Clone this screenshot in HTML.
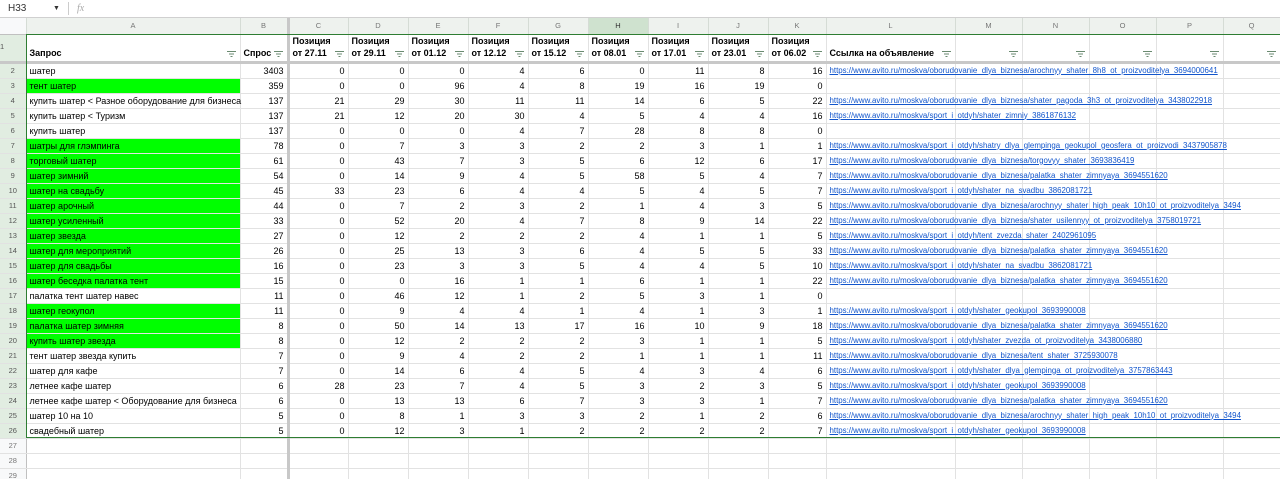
<!DOCTYPE html>
<html><head><meta charset="utf-8">
<style>
*{box-sizing:border-box;margin:0;padding:0}
html,body{width:1280px;height:479px;overflow:hidden}
body{background:#fff;font-family:"Liberation Sans",Arial,sans-serif;font-size:9px;color:#000;position:relative}
.wrap{width:1280px;height:479px;overflow:hidden;position:relative}
.bar{height:18px;border-bottom:1px solid #d0d0d0;position:relative;font-size:10px;color:#333}
.bar span{position:absolute;top:3px}
table{border-collapse:collapse;table-layout:fixed;width:1280px}
td{border-right:1px solid #e2e2e2;border-bottom:1px solid #e2e2e2;height:15px;padding:0 3px;white-space:nowrap;overflow:visible;line-height:14px;text-align:right;position:relative}
td.t{text-align:left}
td.rn{text-align:center;color:#777;font-size:7.5px;background:#f8f9fa;border-right:1px solid #c0c0c0;padding:0}
td.rs{background:#e1ede1;color:#555}
tr.ch td{height:16px;background:#eef2ee;color:#777;font-size:7.5px;text-align:center;border-bottom:1px solid #3a8a4a;border-right:1px solid #d5dcd5;line-height:15px}
tr.ch td.hh{background:#cfe2cf;color:#333}
tr.ch td.c0{background:#f8f9fa;border-bottom:1px solid #c0c0c0}
tr.h td{height:26px;border-bottom:3px solid #c8c8c8;font-weight:bold;text-align:left;vertical-align:bottom;line-height:12px;padding-bottom:2px;white-space:normal}
tr.h td.rn{font-weight:normal;vertical-align:middle}
.f{position:absolute;right:4px;bottom:4px;width:9px;height:6px}
.B{border-right:3px solid #c8c8c8 !important}
.g{background:#00ff00}
a{color:#1155cc;text-decoration:underline;font-size:7.9px;display:inline-block;vertical-align:top;line-height:14px;height:14px}
.sel{position:absolute;left:26px;top:34px;width:1254px;height:404px;border:1px solid #2e7d32;border-right:none;pointer-events:none}
</style></head><body><div class="wrap">
<div class="bar"><span style="left:8px">H33</span><span style="left:53px;font-size:7px;top:5px">▼</span><span style="left:68px;top:2px;height:13px;border-left:1px solid #ccc"></span><span style="left:77px;color:#aaa;font-style:italic;font-family:'Liberation Serif',serif">fx</span></div>
<table>
<colgroup><col style="width:26px"><col style="width:214px"><col style="width:48px"><col style="width:60px"><col style="width:60px"><col style="width:60px"><col style="width:60px"><col style="width:60px"><col style="width:60px"><col style="width:60px"><col style="width:60px"><col style="width:58px"><col style="width:129px"><col style="width:67px"><col style="width:67px"><col style="width:67px"><col style="width:67px"><col style="width:57px"></colgroup>
<tr class="ch"><td class="c0"></td><td>A</td><td class="B">B</td><td>C</td><td>D</td><td>E</td><td>F</td><td>G</td><td class="hh">H</td><td>I</td><td>J</td><td>K</td><td>L</td><td>M</td><td>N</td><td>O</td><td>P</td><td>Q</td></tr>
<tr class="h"><td class="rn rs">1</td><td>Запрос<svg class="f" viewBox="0 0 9 6"><path d="M0 .5h9M2 3h5M3.5 5.5h2" stroke="#6a8a70"/></svg></td><td class="B">Спрос<svg class="f" viewBox="0 0 9 6"><path d="M0 .5h9M2 3h5M3.5 5.5h2" stroke="#6a8a70"/></svg></td><td>Позиция<br>от 27.11<svg class="f" viewBox="0 0 9 6"><path d="M0 .5h9M2 3h5M3.5 5.5h2" stroke="#6a8a70"/></svg></td><td>Позиция<br>от 29.11<svg class="f" viewBox="0 0 9 6"><path d="M0 .5h9M2 3h5M3.5 5.5h2" stroke="#6a8a70"/></svg></td><td>Позиция<br>от 01.12<svg class="f" viewBox="0 0 9 6"><path d="M0 .5h9M2 3h5M3.5 5.5h2" stroke="#6a8a70"/></svg></td><td>Позиция<br>от 12.12<svg class="f" viewBox="0 0 9 6"><path d="M0 .5h9M2 3h5M3.5 5.5h2" stroke="#6a8a70"/></svg></td><td>Позиция<br>от 15.12<svg class="f" viewBox="0 0 9 6"><path d="M0 .5h9M2 3h5M3.5 5.5h2" stroke="#6a8a70"/></svg></td><td>Позиция<br>от 08.01<svg class="f" viewBox="0 0 9 6"><path d="M0 .5h9M2 3h5M3.5 5.5h2" stroke="#6a8a70"/></svg></td><td>Позиция<br>от 17.01<svg class="f" viewBox="0 0 9 6"><path d="M0 .5h9M2 3h5M3.5 5.5h2" stroke="#6a8a70"/></svg></td><td>Позиция<br>от 23.01<svg class="f" viewBox="0 0 9 6"><path d="M0 .5h9M2 3h5M3.5 5.5h2" stroke="#6a8a70"/></svg></td><td>Позиция<br>от 06.02<svg class="f" viewBox="0 0 9 6"><path d="M0 .5h9M2 3h5M3.5 5.5h2" stroke="#6a8a70"/></svg></td><td>Ссылка на объявление<svg class="f" viewBox="0 0 9 6"><path d="M0 .5h9M2 3h5M3.5 5.5h2" stroke="#6a8a70"/></svg></td><td><svg class="f" viewBox="0 0 9 6"><path d="M0 .5h9M2 3h5M3.5 5.5h2" stroke="#6a8a70"/></svg></td><td><svg class="f" viewBox="0 0 9 6"><path d="M0 .5h9M2 3h5M3.5 5.5h2" stroke="#6a8a70"/></svg></td><td><svg class="f" viewBox="0 0 9 6"><path d="M0 .5h9M2 3h5M3.5 5.5h2" stroke="#6a8a70"/></svg></td><td><svg class="f" viewBox="0 0 9 6"><path d="M0 .5h9M2 3h5M3.5 5.5h2" stroke="#6a8a70"/></svg></td><td><svg class="f" viewBox="0 0 9 6"><path d="M0 .5h9M2 3h5M3.5 5.5h2" stroke="#6a8a70"/></svg></td></tr>
<tr><td class="rn rs">2</td><td class="t">шатер</td><td class="B">3403</td><td>0</td><td>0</td><td>0</td><td>4</td><td>6</td><td>0</td><td>11</td><td>8</td><td>16</td><td class="t"><a>https://www.avito.ru/moskva/oborudovanie_dlya_biznesa/arochnyy_shater_8h8_ot_proizvoditelya_3694000641</a></td><td></td><td></td><td></td><td></td><td></td></tr>
<tr><td class="rn rs">3</td><td class="t g">тент шатер</td><td class="B">359</td><td>0</td><td>0</td><td>96</td><td>4</td><td>8</td><td>19</td><td>16</td><td>19</td><td>0</td><td></td><td></td><td></td><td></td><td></td><td></td></tr>
<tr><td class="rn rs">4</td><td class="t">купить шатер &lt; Разное оборудование для бизнеса</td><td class="B">137</td><td>21</td><td>29</td><td>30</td><td>11</td><td>11</td><td>14</td><td>6</td><td>5</td><td>22</td><td class="t"><a>https://www.avito.ru/moskva/oborudovanie_dlya_biznesa/shater_pagoda_3h3_ot_proizvoditelya_3438022918</a></td><td></td><td></td><td></td><td></td><td></td></tr>
<tr><td class="rn rs">5</td><td class="t">купить шатер &lt; Туризм</td><td class="B">137</td><td>21</td><td>12</td><td>20</td><td>30</td><td>4</td><td>5</td><td>4</td><td>4</td><td>16</td><td class="t"><a>https://www.avito.ru/moskva/sport_i_otdyh/shater_zimniy_3861876132</a></td><td></td><td></td><td></td><td></td><td></td></tr>
<tr><td class="rn rs">6</td><td class="t">купить шатер</td><td class="B">137</td><td>0</td><td>0</td><td>0</td><td>4</td><td>7</td><td>28</td><td>8</td><td>8</td><td>0</td><td></td><td></td><td></td><td></td><td></td><td></td></tr>
<tr><td class="rn rs">7</td><td class="t g">шатры для глэмпинга</td><td class="B">78</td><td>0</td><td>7</td><td>3</td><td>3</td><td>2</td><td>2</td><td>3</td><td>1</td><td>1</td><td class="t"><a>https://www.avito.ru/moskva/sport_i_otdyh/shatry_dlya_glempinga_geokupol_geosfera_ot_proizvodi_3437905878</a></td><td></td><td></td><td></td><td></td><td></td></tr>
<tr><td class="rn rs">8</td><td class="t g">торговый шатер</td><td class="B">61</td><td>0</td><td>43</td><td>7</td><td>3</td><td>5</td><td>6</td><td>12</td><td>6</td><td>17</td><td class="t"><a>https://www.avito.ru/moskva/oborudovanie_dlya_biznesa/torgovyy_shater_3693836419</a></td><td></td><td></td><td></td><td></td><td></td></tr>
<tr><td class="rn rs">9</td><td class="t g">шатер зимний</td><td class="B">54</td><td>0</td><td>14</td><td>9</td><td>4</td><td>5</td><td>58</td><td>5</td><td>4</td><td>7</td><td class="t"><a>https://www.avito.ru/moskva/oborudovanie_dlya_biznesa/palatka_shater_zimnyaya_3694551620</a></td><td></td><td></td><td></td><td></td><td></td></tr>
<tr><td class="rn rs">10</td><td class="t g">шатер на свадьбу</td><td class="B">45</td><td>33</td><td>23</td><td>6</td><td>4</td><td>4</td><td>5</td><td>4</td><td>5</td><td>7</td><td class="t"><a>https://www.avito.ru/moskva/sport_i_otdyh/shater_na_svadbu_3862081721</a></td><td></td><td></td><td></td><td></td><td></td></tr>
<tr><td class="rn rs">11</td><td class="t g">шатер арочный</td><td class="B">44</td><td>0</td><td>7</td><td>2</td><td>3</td><td>2</td><td>1</td><td>4</td><td>3</td><td>5</td><td class="t"><a>https://www.avito.ru/moskva/oborudovanie_dlya_biznesa/arochnyy_shater_high_peak_10h10_ot_proizvoditelya_3494</a></td><td></td><td></td><td></td><td></td><td></td></tr>
<tr><td class="rn rs">12</td><td class="t g">шатер усиленный</td><td class="B">33</td><td>0</td><td>52</td><td>20</td><td>4</td><td>7</td><td>8</td><td>9</td><td>14</td><td>22</td><td class="t"><a>https://www.avito.ru/moskva/oborudovanie_dlya_biznesa/shater_usilennyy_ot_proizvoditelya_3758019721</a></td><td></td><td></td><td></td><td></td><td></td></tr>
<tr><td class="rn rs">13</td><td class="t g">шатер звезда</td><td class="B">27</td><td>0</td><td>12</td><td>2</td><td>2</td><td>2</td><td>4</td><td>1</td><td>1</td><td>5</td><td class="t"><a>https://www.avito.ru/moskva/sport_i_otdyh/tent_zvezda_shater_2402961095</a></td><td></td><td></td><td></td><td></td><td></td></tr>
<tr><td class="rn rs">14</td><td class="t g">шатер для мероприятий</td><td class="B">26</td><td>0</td><td>25</td><td>13</td><td>3</td><td>6</td><td>4</td><td>5</td><td>5</td><td>33</td><td class="t"><a>https://www.avito.ru/moskva/oborudovanie_dlya_biznesa/palatka_shater_zimnyaya_3694551620</a></td><td></td><td></td><td></td><td></td><td></td></tr>
<tr><td class="rn rs">15</td><td class="t g">шатер для свадьбы</td><td class="B">16</td><td>0</td><td>23</td><td>3</td><td>3</td><td>5</td><td>4</td><td>4</td><td>5</td><td>10</td><td class="t"><a>https://www.avito.ru/moskva/sport_i_otdyh/shater_na_svadbu_3862081721</a></td><td></td><td></td><td></td><td></td><td></td></tr>
<tr><td class="rn rs">16</td><td class="t g">шатер беседка палатка тент</td><td class="B">15</td><td>0</td><td>0</td><td>16</td><td>1</td><td>1</td><td>6</td><td>1</td><td>1</td><td>22</td><td class="t"><a>https://www.avito.ru/moskva/oborudovanie_dlya_biznesa/palatka_shater_zimnyaya_3694551620</a></td><td></td><td></td><td></td><td></td><td></td></tr>
<tr><td class="rn rs">17</td><td class="t">палатка тент шатер навес</td><td class="B">11</td><td>0</td><td>46</td><td>12</td><td>1</td><td>2</td><td>5</td><td>3</td><td>1</td><td>0</td><td></td><td></td><td></td><td></td><td></td><td></td></tr>
<tr><td class="rn rs">18</td><td class="t g">шатер геокупол</td><td class="B">11</td><td>0</td><td>9</td><td>4</td><td>4</td><td>1</td><td>4</td><td>1</td><td>3</td><td>1</td><td class="t"><a>https://www.avito.ru/moskva/sport_i_otdyh/shater_geokupol_3693990008</a></td><td></td><td></td><td></td><td></td><td></td></tr>
<tr><td class="rn rs">19</td><td class="t g">палатка шатер зимняя</td><td class="B">8</td><td>0</td><td>50</td><td>14</td><td>13</td><td>17</td><td>16</td><td>10</td><td>9</td><td>18</td><td class="t"><a>https://www.avito.ru/moskva/oborudovanie_dlya_biznesa/palatka_shater_zimnyaya_3694551620</a></td><td></td><td></td><td></td><td></td><td></td></tr>
<tr><td class="rn rs">20</td><td class="t g">купить шатер звезда</td><td class="B">8</td><td>0</td><td>12</td><td>2</td><td>2</td><td>2</td><td>3</td><td>1</td><td>1</td><td>5</td><td class="t"><a>https://www.avito.ru/moskva/sport_i_otdyh/shater_zvezda_ot_proizvoditelya_3438006880</a></td><td></td><td></td><td></td><td></td><td></td></tr>
<tr><td class="rn rs">21</td><td class="t">тент шатер звезда купить</td><td class="B">7</td><td>0</td><td>9</td><td>4</td><td>2</td><td>2</td><td>1</td><td>1</td><td>1</td><td>11</td><td class="t"><a>https://www.avito.ru/moskva/oborudovanie_dlya_biznesa/tent_shater_3725930078</a></td><td></td><td></td><td></td><td></td><td></td></tr>
<tr><td class="rn rs">22</td><td class="t">шатер для кафе</td><td class="B">7</td><td>0</td><td>14</td><td>6</td><td>4</td><td>5</td><td>4</td><td>3</td><td>4</td><td>6</td><td class="t"><a>https://www.avito.ru/moskva/sport_i_otdyh/shater_dlya_glempinga_ot_proizvoditelya_3757863443</a></td><td></td><td></td><td></td><td></td><td></td></tr>
<tr><td class="rn rs">23</td><td class="t">летнее кафе шатер</td><td class="B">6</td><td>28</td><td>23</td><td>7</td><td>4</td><td>5</td><td>3</td><td>2</td><td>3</td><td>5</td><td class="t"><a>https://www.avito.ru/moskva/sport_i_otdyh/shater_geokupol_3693990008</a></td><td></td><td></td><td></td><td></td><td></td></tr>
<tr><td class="rn rs">24</td><td class="t">летнее кафе шатер &lt; Оборудование для бизнеса</td><td class="B">6</td><td>0</td><td>13</td><td>13</td><td>6</td><td>7</td><td>3</td><td>3</td><td>1</td><td>7</td><td class="t"><a>https://www.avito.ru/moskva/oborudovanie_dlya_biznesa/palatka_shater_zimnyaya_3694551620</a></td><td></td><td></td><td></td><td></td><td></td></tr>
<tr><td class="rn rs">25</td><td class="t">шатер 10 на 10</td><td class="B">5</td><td>0</td><td>8</td><td>1</td><td>3</td><td>3</td><td>2</td><td>1</td><td>2</td><td>6</td><td class="t"><a>https://www.avito.ru/moskva/oborudovanie_dlya_biznesa/arochnyy_shater_high_peak_10h10_ot_proizvoditelya_3494</a></td><td></td><td></td><td></td><td></td><td></td></tr>
<tr><td class="rn rs">26</td><td class="t">свадебный шатер</td><td class="B">5</td><td>0</td><td>12</td><td>3</td><td>1</td><td>2</td><td>2</td><td>2</td><td>2</td><td>7</td><td class="t"><a>https://www.avito.ru/moskva/sport_i_otdyh/shater_geokupol_3693990008</a></td><td></td><td></td><td></td><td></td><td></td></tr>
<tr><td class="rn">27</td><td></td><td class="B"></td><td></td><td></td><td></td><td></td><td></td><td></td><td></td><td></td><td></td><td></td><td></td><td></td><td></td><td></td><td></td></tr>
<tr><td class="rn">28</td><td></td><td class="B"></td><td></td><td></td><td></td><td></td><td></td><td></td><td></td><td></td><td></td><td></td><td></td><td></td><td></td><td></td><td></td></tr>
<tr><td class="rn">29</td><td></td><td class="B"></td><td></td><td></td><td></td><td></td><td></td><td></td><td></td><td></td><td></td><td></td><td></td><td></td><td></td><td></td><td></td></tr>
</table>
<div class="sel"></div>
</div></body></html>
